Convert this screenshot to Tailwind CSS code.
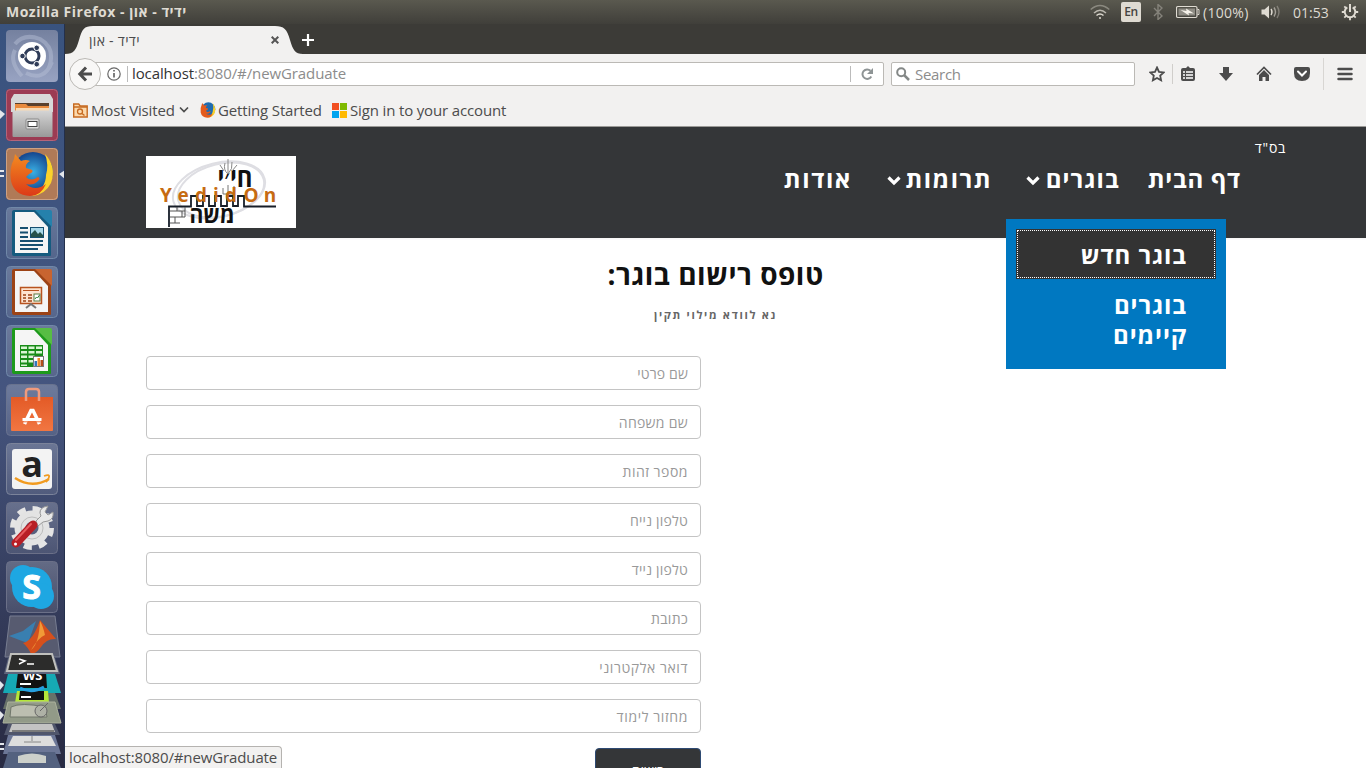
<!DOCTYPE html>
<html lang="he">
<head>
<meta charset="utf-8">
<title>ידיד - און</title>
<script src="https://cdn.jsdelivr.net/npm/@tailwindcss/browser@4"></script>
</head>
<body class="bg-white">
<div class="relative flex h-[768px] w-[1366px] flex-col overflow-hidden font-['Open_Sans','Noto_Sans',sans-serif] text-[#4c4c4c]">

  <!-- System panel -->
  <header class="flex h-6 shrink-0 items-center justify-between bg-linear-to-b from-[#5a594f] to-[#403f3a] pl-1.5 pr-[7px] text-[#dfdbd2]">
    <div class="whitespace-nowrap text-[14px] font-bold leading-6 tracking-[0.5px]" dir="ltr">Mozilla Firefox - <span>ידיד - און</span></div>
    <div class="flex h-6 items-center text-[14px]">
      <svg class="mr-[11px] h-4 w-5" viewBox="0 0 20 16" fill="none" stroke="#dfdbd2" stroke-width="1.5"><path d="M.7 5.5Q10-2.500 19.300 5.500" opacity=".4"/><path d="M4 9Q10 3.500 16 9" opacity=".75"/><path d="M6.500 11.500Q10 8.500 13.500 11.500"/><circle cx="10" cy="14" r="1" fill="#dfdbd2" stroke="none"/></svg>
      <div class="mr-3 flex h-5 w-5 items-center justify-center rounded-xs bg-[#dfdbd2] text-[12px] font-semibold tracking-[-0.5px] text-[#45443f]">En</div>
      <svg class="mr-[13px] h-4 w-2.5" viewBox="0 0 10 16" fill="none" stroke="#85837b" stroke-width="1.4"><path d="M1 4l8 8-4 3.500V.5L9 4l-8 8"/></svg>
      <svg class="mr-[3px] h-3.5 w-6" viewBox="0 0 24 14" fill="none" stroke="#dfdbd2"><rect x=".5" y="1.500" width="20.500" height="11" rx="1.500" stroke-width="1.200"/><path d="M21.500 4.500h1.500v5h-1.500"/><rect x="2.500" y="3.500" width="16.500" height="7" fill="#8f8d85" stroke="none"/><path d="M4.500 5l6 1-.5-2.500L18 8.500l-5.500-.5.5 2.500z" fill="#f4f1e9" stroke="none"/></svg>
      <div class="w-[58px] whitespace-nowrap tracking-[0.3px]">(100%)</div>
      <svg class="h-4 w-5" viewBox="0 0 20 16" fill="none" stroke="#dfdbd2" stroke-width="1.400"><path d="M.5 5.500h3L8 1.500v13l-4.500-4h-3z" fill="#dfdbd2" stroke="none"/><path d="M10 5q2 3 0 6"/><path d="M13 3.500q3 4.500 0 9" opacity=".6"/><path d="M16 2q4 6 0 12" opacity=".35"/></svg>
      <div class="ml-3 w-[48px] whitespace-nowrap">01:53</div>
      <svg class="h-[18px] w-[18px]" viewBox="0 0 18 18" fill="none" stroke="#dfdbd2"><path d="M6.300 4.300a5.300 5.300 0 1 0 5.400 0" stroke-width="2"/><path d="M9 1v8" stroke-width="2"/><path d="M.8 9h3M14.200 9h3M9 14v3.200M3.300 3.300l2 2M14.700 3.300l-2 2M3.300 14.700l2-2M14.700 14.700l-2-2" stroke-width="1.800"/></svg>
    </div>
  </header>

  <div class="flex min-h-0 flex-1">
    <!-- Launcher -->
    <aside class="relative w-[65px] shrink-0 overflow-hidden border-r border-[#24304c] bg-linear-to-b from-[#39537f] via-[#45557f] via-50% to-[#282a42]">
      <div class="flex flex-col gap-[7px] pl-1.5 pt-1.5">
        <svg class="block h-[52px] w-[52px]" viewBox="0 0 52 52"><defs><linearGradient id="g" x2="0" y2="1"><stop stop-color="#75819f"/><stop offset="1" stop-color="#98a3c2"/></linearGradient><linearGradient id="dk" x2="0" y2="1"><stop stop-color="#fff" stop-opacity=".22"/><stop offset="1" stop-color="#fff" stop-opacity=".1"/></linearGradient></defs><rect width="52" height="52" rx="4" fill="url(#g)"/><g fill="none" stroke="#b9c2d8" stroke-width="4" opacity=".45"><path d="M9 14Q18 3 34 9Q50 18 43 38"/><path d="M16 46Q3 32 9 20"/><path d="M20 43Q38 52 46 32"/></g><circle cx="26" cy="26" r="14" fill="#fff"/><circle cx="26" cy="26" r="7" fill="none" stroke="#2f3c58" stroke-width="3"/><g fill="#2f3c58" stroke="#fff"><circle cx="16.500" cy="26" r="2.800"/><circle cx="30.700" cy="17.800" r="2.800"/><circle cx="30.700" cy="34.200" r="2.800"/></g></svg>
        <svg class="block h-[52px] w-[52px]" viewBox="0 0 52 52"><defs><linearGradient id="cab" x2="0" y2="1"><stop stop-color="#d5d5d5"/><stop offset="1" stop-color="#999"/></linearGradient></defs><rect width="52" height="52" rx="4" fill="#9c3b53"/><rect x=".5" y=".5" width="51" height="51" rx="4" fill="none" stroke="#b5647a"/><path d="M8 5h36l3 5v13H5V10z" fill="#d8d8d8"/><path d="M9 14h34v8H9z" fill="#59402d"/><path d="M9 15h11l2 2h21v5H9z" fill="#e88a3d"/><path d="M10 19h33v3H10z" fill="#f8d9b3"/><rect x="6.500" y="21.500" width="40" height="26.500" rx="1" fill="url(#cab)"/><rect x="20" y="30" width="13" height="10" rx="1" fill="#ddd" stroke="#888"/><rect x="22" y="32.500" width="9" height="5" fill="#fff" stroke="#444"/></svg>
        <svg class="block h-[52px] w-[52px]" viewBox="0 0 52 52"><defs><radialGradient id="fb"><stop stop-color="#39b0e5"/><stop offset="1" stop-color="#15458d"/></radialGradient><linearGradient id="fo" x2="0" y2="1"><stop stop-color="#f38b20"/><stop offset="1" stop-color="#dc3a18"/></linearGradient></defs><rect width="52" height="52" rx="4" fill="#b07a57"/><rect x=".5" y=".5" width="51" height="51" rx="4" fill="none" stroke="#cda184"/><circle cx="27" cy="24" r="20" fill="url(#fb)"/><path d="M39 6Q51 19 45 35Q39 47 26 48Q40 40 40 27Q43 17 39 6z" fill="#fbd22c"/><path d="M8 11l1-5 6 7q5-2 9 0-5 3-4 7l6 2q2 2-3 4l-3 3q5 5 12 0 3 1 0 4-5 5-12 3 9 8 20 0-5 12-16 12Q8 47 5 33 3 20 8 11z" fill="url(#fo)"/></svg>
        <svg class="block h-[52px] w-[52px]" viewBox="0 0 52 52"><rect x=".5" y=".5" width="51" height="51" rx="4" fill="url(#dk)" stroke="#7088a8"/><path d="M8 3h24l13 15v30q0 1-1 1H8q-2 0-2-2V5q0-2 2-2z" fill="#155b7f"/><path d="M9 5h19l14 15v26H9z" fill="#f5f5f5"/><path d="M29 3h15q2 0 2 2v15z" fill="#2581ac"/><path d="M14 21h8M14 25.500h8M14 30h8M14 34h23M14 38h23M14 42h18" stroke="#164f70" stroke-width="2"/><rect x="24.500" y="20.500" width="13" height="10" fill="#a9d8e8" stroke="#164f70"/><path d="M25 30v-3l4-4 3 4 2-2 3 3v2z" fill="#245049"/></svg>
        <svg class="block h-[52px] w-[52px]" viewBox="0 0 52 52"><rect x=".5" y=".5" width="51" height="51" rx="4" fill="url(#dk)" stroke="#7088a8"/><path d="M8 3h24l13 15v30q0 1-1 1H8q-2 0-2-2V5q0-2 2-2z" fill="#9c4316"/><path d="M9 5h19l14 15v26H9z" fill="#f5f5f5"/><path d="M29 3h15q2 0 2 2v15z" fill="#c86430"/><rect x="14.500" y="21.500" width="21" height="16" fill="#fde4d1" stroke="#b8531f" stroke-width="1.500"/><path d="M17 24.500h16" stroke="#b8531f"/><path d="M17 29h3M17 32h3M17 35h3M22 29h4M22 32h4M22 35h4" stroke="#9c4316" stroke-width="1.700"/><rect x="28" y="28" width="6" height="7" fill="#fff" stroke="#587d46"/><path d="M29 33l1.500-2 1 1 2-3" fill="none" stroke="#30823b"/><path d="M20 42l5-4 5 4" fill="none" stroke="#777" stroke-width="2"/></svg>
        <svg class="block h-[52px] w-[52px]" viewBox="0 0 52 52"><rect x=".5" y=".5" width="51" height="51" rx="4" fill="url(#dk)" stroke="#7088a8"/><path d="M8 3h24l13 15v30q0 1-1 1H8q-2 0-2-2V5q0-2 2-2z" fill="#1d9a1b"/><path d="M9 5h19l14 15v26H9z" fill="#f5f5f5"/><path d="M29 3h15q2 0 2 2v15z" fill="#57bd43"/><path d="M14 20h23v22H14z" fill="#188c18"/><path d="M15 21.500h6v2.500h-6zM22.500 21.500h6v2.500h-6zM30 21.500h6v2.500h-6zM15 26h6v2.500h-6zM22.500 26h6v2.500h-6zM30 26h6v2.500h-6zM15 30.500h6V33h-6zM22.500 30.500h6V33h-6zM15 35h6v2.500h-6zM22.500 35h6v2.500h-6zM15 39.500h6V41h-6z" fill="#d9f5d4"/><rect x="27.500" y="31.500" width="10" height="10" fill="#fff" stroke="#777"/><path d="M28.500 36h2.500v5h-2.500z" fill="#3378bc"/><path d="M31.500 33H34v8h-2.500z" fill="#ee8b2b"/><path d="M34.500 35H37v6h-2.500z" fill="#b24b19"/></svg>
        <svg class="block h-[52px] w-[52px]" viewBox="0 0 52 52"><defs><linearGradient id="or" x2="0" y2="1"><stop stop-color="#e35a26"/><stop offset="1" stop-color="#f17642"/></linearGradient></defs><rect x=".5" y=".5" width="51" height="51" rx="4" fill="url(#dk)" stroke="#69738f"/><path d="M5 13h42v33q0 1-1 1H6q-1 0-1-1z" fill="url(#or)"/><path d="M20 17V8q0-3 3-3h7q3 0 3 3v9" fill="none" stroke="#f09a7c" stroke-width="2.500"/><g fill="none" stroke="#fff" stroke-width="3.500"><path d="M18.500 40L25 26.500h2L33.500 40"/><path d="M16.500 35.500h19" stroke-width="3"/></g><path d="M17 37.800h18" stroke="#ec6b38"/></svg>
        <svg class="block h-[52px] w-[52px]" viewBox="0 0 52 52"><rect x=".5" y=".5" width="51" height="51" rx="4" fill="url(#dk)" stroke="#7b839a"/><rect x="6" y="6" width="40" height="40" rx="3" fill="#f3f3f3"/><text x="26" y="33.500" text-anchor="middle" font-family="Open Sans" font-weight="700" font-size="36" fill="#222">a</text><path d="M9 35q17 11 34 1" fill="none" stroke="#f19b20" stroke-width="2.500"/><path d="M38 33q6-2 5 1-.3 3-3 5" fill="none" stroke="#f19b20" stroke-width="1.800"/></svg>
        <svg class="block h-[52px] w-[52px]" viewBox="0 0 52 52"><rect x=".5" y=".5" width="51" height="51" rx="4" fill="url(#dk)" stroke="#6b7088"/><circle cx="26" cy="26" r="19" fill="none" stroke="#e5e5e5" stroke-width="6" stroke-dasharray="8 6.920"/><circle cx="26" cy="26" r="12" fill="none" stroke="#e3e3e3" stroke-width="11"/><circle cx="26" cy="26" r="11" fill="none" stroke="#bdbdbd"/><path d="M30 19l5-5q-3-6 3-9l4-1-3 6 3 3 5-3q1 7-5 9l-5 1-5 4z" fill="#e8e8e8" stroke="#999"/><path d="M10 41L27 23" stroke="#b81e25" stroke-width="9" stroke-linecap="round"/><path d="M10 38L25 22" stroke="#e65a5d" stroke-width="2" stroke-linecap="round"/><circle cx="9.500" cy="42" r="1.500" fill="#fff"/></svg>
        <svg class="block h-[52px] w-[52px]" viewBox="0 0 52 52"><rect x=".5" y=".5" width="51" height="51" rx="4" fill="url(#dk)" stroke="#6b7088"/><g fill="#1ea7e2"><circle cx="26" cy="26" r="20"/><circle cx="17" cy="17" r="13"/><circle cx="35" cy="35" r="13"/></g><text x="25.500" y="38" text-anchor="middle" font-family="Open Sans" font-weight="700" font-size="34" fill="#fff" stroke="#fff">S</text></svg>
      </div>
      <!-- Folded launcher items -->
      <svg class="block h-[155px] w-[65px]" viewBox="0 613 65 155">
        <path d="M10 616h45l5 41H5z" fill="#575b70" stroke="#777d91"/><path d="M9 636l14-5 13-10-8 22-6-2z" fill="#397fb0"/><path d="M23 643q10-2 17-23 5 6 16 19-9-1-15 8-5 7-10 7-3-7-8-11z" fill="#d5501c"/><path d="M31 650q8-6 9-29 3 5 5 14-6 2-14 15z" fill="#f19a37"/>
        <path d="M8 674h47l6 19H3z" fill="#16a9b4"/><path d="M18 672h28l1 16H16z" fill="#111"/><text x="32.500" y="680" text-anchor="middle" font-family="Open Sans" font-size="13" font-weight="700" fill="#fff">WS</text><path d="M20 684h11" stroke="#fff" stroke-width="2"/>
        <path d="M8 658h47l5 16H4z" fill="#5e657b"/><path d="M11 654h41l5 17H7z" fill="#2c2c2b" stroke="#c0c0bd" stroke-width="2"/><path d="M19 659l6 2-6 3M27 664h7" fill="none" stroke="#fff" stroke-width="1.500"/>
        <path d="M8 693h47l6 16H3z" fill="#677169"/><path d="M17 691h31l1 12H15z" fill="#b5e73a"/><path d="M20 691h24v9H19z" fill="#111"/><path d="M21 697h10" stroke="#fff" stroke-width="2"/><path d="M20 688q12 6 24-1" fill="none" stroke="#269fe0" stroke-width="3"/>
        <path d="M8 702h47l6 21H3z" fill="#929a88" stroke="#abb19c"/><path d="M11 707q10-5 34 0l2 10H10z" fill="#bcbeb0" stroke="#70766b"/><circle cx="41" cy="711" r="6" fill="#aeb1a6" stroke="#666"/><path d="M40 711l8-8" stroke="#666"/>
        <path d="M8 724h47l5 11H4z" fill="#50566c"/><path d="M12 724h40l3 8H9z" fill="#c3c3c3"/><path d="M12 731h42" stroke="#333"/>
        <path d="M8 735h47l6 19H3z" fill="#6c7797"/><path d="M13 736h38l5 10H8z" fill="#ddd"/><path d="M32 736v5M24 742h17" stroke="#888"/>
        <path d="M8 752h47l6 16H3z" fill="#53617f"/><path d="M18 756q14-5 28 0v7H18z" fill="#ccd0cb"/>
      </svg>
      <!-- Running-application markers -->
      <svg class="absolute left-0 top-0 h-[744px] w-[65px]" viewBox="0 24 65 744" fill="#e4e7ec"><path d="M0 110l5 4-5 5zM0 170h4v2H0zM0 175h4v2H0zM65 170l-6 4 6 5zM0 681l4 4-4 5zM0 711l4 4-4 5zM0 743h4v2H0zM0 748h4v2H0z"/></svg>
    </aside>

    <!-- Browser window -->
    <main class="relative flex min-w-0 flex-1 flex-col">
      <div class="flex h-[30px] shrink-0 items-end bg-[#3c3b37]">
        <div class="relative h-7 w-[238px]">
          <svg class="absolute inset-0 h-7 w-[238px]" viewBox="0 0 238 28"><path d="M0 28C9 28 11 24 14 14C17 3 19 0 28 0H210C219 0 222 3 225 14C228 24 230 28 238 28z" fill="#f2f1f0"/></svg>
          <div class="relative flex h-7 items-center pl-6">
            <div class="w-[182px] whitespace-nowrap pt-px text-[14px] tracking-[0.3px]" dir="ltr">ידיד - און</div>
            <svg class="h-2 w-2" viewBox="0 0 8 8" stroke="#555" stroke-width="2"><path d="M.7.700l6.600 6.600M7.300.7L.7 7.300"/></svg>
          </div>
        </div>
        <svg class="mb-2 -ml-px h-3 w-3" viewBox="0 0 12 12" stroke="#fff" stroke-width="2.200"><path d="M6 0v12M0 6h12"/></svg>
      </div>

      <div class="flex h-[39px] shrink-0 items-center bg-[#f2f1f0] text-[15px] tracking-[-0.1px]">
        <div class="z-10 ml-1 flex h-8 w-8 shrink-0 items-center justify-center rounded-full border border-[#bbb9b5] bg-[#f8f7f6]">
          <svg class="h-4 w-4" viewBox="0 0 16 16" fill="none" stroke="#4c4c4c" stroke-width="3"><path d="M9 1.500L2.800 8 9 14.500M3 8h12"/></svg>
        </div>
        <div class="-ml-2 flex h-6 w-[791px] shrink-0 items-center rounded-xs border border-[#bbb9b5] bg-white pl-[13px]">
          <svg class="h-3.5 w-3.5" viewBox="0 0 14 14" fill="none" stroke="#686868"><circle cx="7" cy="7" r="6.200" stroke-width="1.200"/><path d="M7 6v4.500M7 3v1.500" stroke-width="1.700"/></svg>
          <div class="ml-1.5 h-4 w-px bg-[#bbb]"></div>
          <div class="ml-1 flex-1 whitespace-nowrap text-[#8c8c8c]"><span class="text-[#333]">localhost</span>:8080/#/newGraduate</div>
          <div class="h-4 w-px bg-[#bbb]"></div>
          <svg class="mx-[10px] h-3 w-3" viewBox="0 0 12 12" fill="none"><path d="M9.500 2.800A4.700 4.700 0 1 0 10.300 8.500" stroke="#8e9495" stroke-width="2"/><path d="M12 0v6H6z" fill="#8e9495"/></svg>
        </div>
        <div class="ml-[7px] flex h-6 w-[244px] shrink-0 items-center rounded-xs border border-[#bbb9b5] bg-white pl-1">
          <svg class="h-3.5 w-3.5" viewBox="0 0 14 14" fill="none" stroke="#848887"><circle cx="5.200" cy="5.200" r="4" stroke-width="2"/><path d="M8 8l5 5" stroke-width="2.500"/></svg>
          <div class="ml-[5px] pt-px tracking-[-0.3px] text-[#8c8c8c]">Search</div>
        </div>
        <svg class="ml-[14px] h-4 w-4" viewBox="0 0 16 16" fill="none" stroke="#4c4c4c" stroke-width="1.800"><path d="M8 1.500l2 4.300 4.700.600-3.500 3.200.9 4.700L8 12l-4.100 2.300.9-4.700L1.300 6.400 6 5.800z"/></svg>
        <div class="ml-[7px] h-5 w-px bg-[#d0cecb]"></div>
        <svg class="ml-[7px] h-4 w-4" viewBox="0 0 16 16"><path d="M3 2h3l2-2 2 2h3q2 0 2 2v9q0 2-2 2H3q-2 0-2-2V4q0-2 2-2z" fill="#4c4c4c"/><path d="M3 6h2M3 9h2M3 12h2M6 6h7M6 9h7M6 12h7" stroke="#fff" stroke-width="1.500"/></svg>
        <svg class="ml-[22px] h-4 w-4" viewBox="0 0 16 16"><path d="M5 1h6v6h4l-7 8-7-8h4z" fill="#4c4c4c"/></svg>
        <svg class="ml-[22px] h-4 w-4" viewBox="0 0 16 16"><path d="M1 8.500l7-7 7 7" fill="none" stroke="#4c4c4c" stroke-width="1.700"/><path d="M3 9l5-5 5 5v6H9.500v-4h-3v4H3z" fill="#4c4c4c"/></svg>
        <svg class="ml-[22px] h-4 w-4" viewBox="0 0 16 16"><path d="M2 1h12q2 0 2 2v4q0 8-8 8T0 7V3q0-2 2-2z" fill="#4c4c4c"/><path d="M4 5.500l4 4 4-4" fill="none" stroke="#fff" stroke-width="2" stroke-linecap="round"/></svg>
        <div class="ml-[13px] h-8 w-px bg-[#d8d6d3]"></div>
        <svg class="ml-[13px] h-4 w-4" viewBox="0 0 16 16" stroke="#4c4c4c" stroke-width="2.500" stroke-linecap="round"><path d="M1.500 3h13M1.500 8h13M1.500 13h13"/></svg>
      </div>

      <div class="flex h-[34px] shrink-0 items-center border-b border-[#9b9a97] bg-[#f2f1f0] pl-2 pt-px text-[15px] tracking-[-0.15px]">
        <svg class="h-[15px] w-[15px]" viewBox="0 0 15 15" fill="none" stroke="#c66a20"><path d="M.7 14V1h5l1.500 2h7v11z" fill="#fcd9ac" stroke-width="1.400"/><path d="M1 4h13" stroke-width="1.500"/><circle cx="7" cy="8.500" r="2.500" stroke-width="1.300"/><path d="M9 10.500l2.500 2" stroke-width="1.500"/></svg>
        <div class="ml-[3px] w-[88px] whitespace-nowrap">Most Visited</div>
        <svg class="h-2 w-2.5" viewBox="0 0 10 8" fill="none" stroke="#4c4c4c" stroke-width="1.700"><path d="M1 1.500l4 4 4-4"/></svg>
        <svg class="ml-[11px] h-4 w-4" viewBox="3 3 46 46"><circle cx="27" cy="24" r="20" fill="#1e6bb0"/><path d="M39 6Q51 19 45 35Q39 47 26 48Q40 40 40 27Q43 17 39 6z" fill="#fbd22c"/><path d="M8 11l1-5 6 7q5-2 9 0-5 3-4 7l6 2q2 2-3 4l-3 3q5 5 12 0 3 1 0 4-5 5-12 3 9 8 20 0-5 12-16 12Q8 47 5 33 3 20 8 11z" fill="#e45b1c"/></svg>
        <div class="ml-0.5 w-[114px] whitespace-nowrap">Getting Started</div>
        <div class="grid h-[15px] w-[15px] grid-cols-2 gap-px"><i class="bg-[#f25022]"></i><i class="bg-[#7fba00]"></i><i class="bg-[#00a4ef]"></i><i class="bg-[#ffb900]"></i></div>
        <div class="ml-[3px] whitespace-nowrap">Sign in to your account</div>
      </div>

      <!-- Web page -->
      <div class="flex flex-1 flex-col bg-white" dir="rtl">
        <div class="relative flex h-[111px] shrink-0 items-start justify-between bg-[#343638] pr-20 shadow-xs">
          <div class="text-white">
            <div class="h-[37px] pt-[11px] text-[14px] leading-5 tracking-[0.7px]">בס"ד</div>
            <nav class="flex whitespace-nowrap pr-[45px] text-[24px] font-bold leading-[30px]">
              <a class="w-[93px] tracking-[0.75px]">דף הבית</a>
              <a class="mr-7 flex w-[94px] items-center justify-between tracking-[1.1px]">בוגרים<svg class="mt-1 h-3 w-3.5" viewBox="0 0 14 12" fill="none" stroke="#fff" stroke-width="3.200"><path d="M1.500 2.500L7 8l5.500-5.500"/></svg></a>
              <a class="mr-[34px] flex w-[105px] items-center justify-between tracking-[1.5px]">תרומות<svg class="mt-1 h-3 w-3.5" viewBox="0 0 14 12" fill="none" stroke="#fff" stroke-width="3.200"><path d="M1.500 2.500L7 8l5.500-5.500"/></svg></a>
              <a class="mr-[35px] tracking-[1.6px]">אודות</a>
            </nav>
          </div>
          <svg class="ml-[81px] mt-[29px] h-[72px] w-[150px] bg-white" viewBox="0 0 150 72" direction="ltr">
            <g fill="none" stroke="#dedee3" stroke-width="2"><ellipse cx="73" cy="34" rx="47" ry="27" transform="rotate(-14 73 34)"/><ellipse cx="75" cy="34" rx="44" ry="26" transform="rotate(-14 75 34)"/></g>
            <text x="89" y="31" text-anchor="middle" font-family="Open Sans" font-size="26" font-weight="700" fill="#111" textLength="35" lengthAdjust="spacingAndGlyphs">חי׳י</text>
            <path d="M82 18q-5-4-3-11M82 18V3M82 18q5-5 4-12M78 15l-4-6M86 15l5-6" fill="none" stroke="#888"/>
            <path d="M23 71V50.500h22V40h6v10h6V40h6v10h6V40h6v10h6V40h6v10h5V40h6v10.500h32" fill="none" stroke="#161d28" stroke-width="1.800"/>
            <path d="M24 55h15M24 61h15M24 67h10M31 51v4M36 55v6M29 61v6M39 51v10" stroke="#555" fill="none"/>
            <path d="M77 32v6h11v-8M82 29v9" fill="none" stroke="#777"/>
            <text x="66" y="67" text-anchor="middle" font-family="Open Sans" font-size="23" font-weight="700" fill="#111" textLength="45" lengthAdjust="spacingAndGlyphs">משה</text>
            <g font-family="Open Sans" font-size="19" font-weight="700" fill="#c66b12" text-anchor="middle"><text x="20" y="46">Y</text><text x="37" y="46">e</text><text x="55" y="46">d</text><text x="70" y="46">i</text><text x="85" y="46">d</text><text x="105" y="46">O</text><text x="124" y="46">n</text></g>
          </svg>
          <!-- Submenu -->
          <div class="absolute right-[140px] top-[92px] z-10 h-[150px] w-[220px] bg-[#0078c1] p-2.5 text-[24px] font-bold leading-[30px] tracking-[0.9px] text-white">
            <div class="h-[50px] border border-[#333] bg-[#333]"><div class="h-12 border border-dotted border-white pr-[27px] pt-[9px]">בוגר חדש</div></div>
            <div class="w-[150px] pr-[29px] pt-[11px]">בוגרים קיימים</div>
          </div>
        </div>

        <div class="flex flex-col items-center pt-5 text-center">
          <h1 class="text-[28px] font-bold leading-[32px] tracking-[0.5px] text-[#111]">טופס רישום בוגר:</h1>
          <p class="mt-[17px] text-[11px] font-bold leading-4 tracking-[1.7px] text-[#666]">נא לוודא מילוי תקין</p>
        </div>
        <form class="mr-auto ml-[81px] mt-[33px] flex w-[555px] flex-col gap-[15px]">
          <input class="h-[34px] w-full rounded border border-[#c4c4c4] px-3 text-[14px] tracking-[0.15px] placeholder:text-[#999]" placeholder="שם פרטי">
          <input class="h-[34px] w-full rounded border border-[#c4c4c4] px-3 text-[14px] tracking-[0.3px] placeholder:text-[#999]" placeholder="שם משפחה">
          <input class="h-[34px] w-full rounded border border-[#c4c4c4] px-3 text-[14px] tracking-[0.5px] placeholder:text-[#999]" placeholder="מספר זהות">
          <input class="h-[34px] w-full rounded border border-[#c4c4c4] px-3 text-[14px] tracking-[0.2px] placeholder:text-[#999]" placeholder="טלפון נייח">
          <input class="h-[34px] w-full rounded border border-[#c4c4c4] px-3 text-[14px] tracking-[0.2px] placeholder:text-[#999]" placeholder="טלפון נייד">
          <input class="h-[34px] w-full rounded border border-[#c4c4c4] px-3 text-[14px] tracking-[0.3px] placeholder:text-[#999]" placeholder="כתובת">
          <input class="h-[34px] w-full rounded border border-[#c4c4c4] px-3 text-[14px] tracking-[0.55px] placeholder:text-[#999]" placeholder="דואר אלקטרוני">
          <input class="h-[34px] w-full rounded border border-[#c4c4c4] px-3 text-[14px] tracking-[0.6px] placeholder:text-[#999]" placeholder="מחזור לימוד">
          <button type="button" class="h-[44px] w-[106px] shrink-0 rounded border border-[#2e4a73] bg-[#343638] text-[14px] text-white">רישום</button>
        </form>
      </div>
      <div class="absolute bottom-0 left-0 h-[22px] w-[217px] whitespace-nowrap rounded-tr border-r border-t border-[#b5b3b0] bg-[#f2f1f0] pl-1 text-[15px] leading-[21px] tracking-[-0.12px]">localhost:8080/#newGraduate</div>
    </main>
  </div>
</div>
</body>
</html>
